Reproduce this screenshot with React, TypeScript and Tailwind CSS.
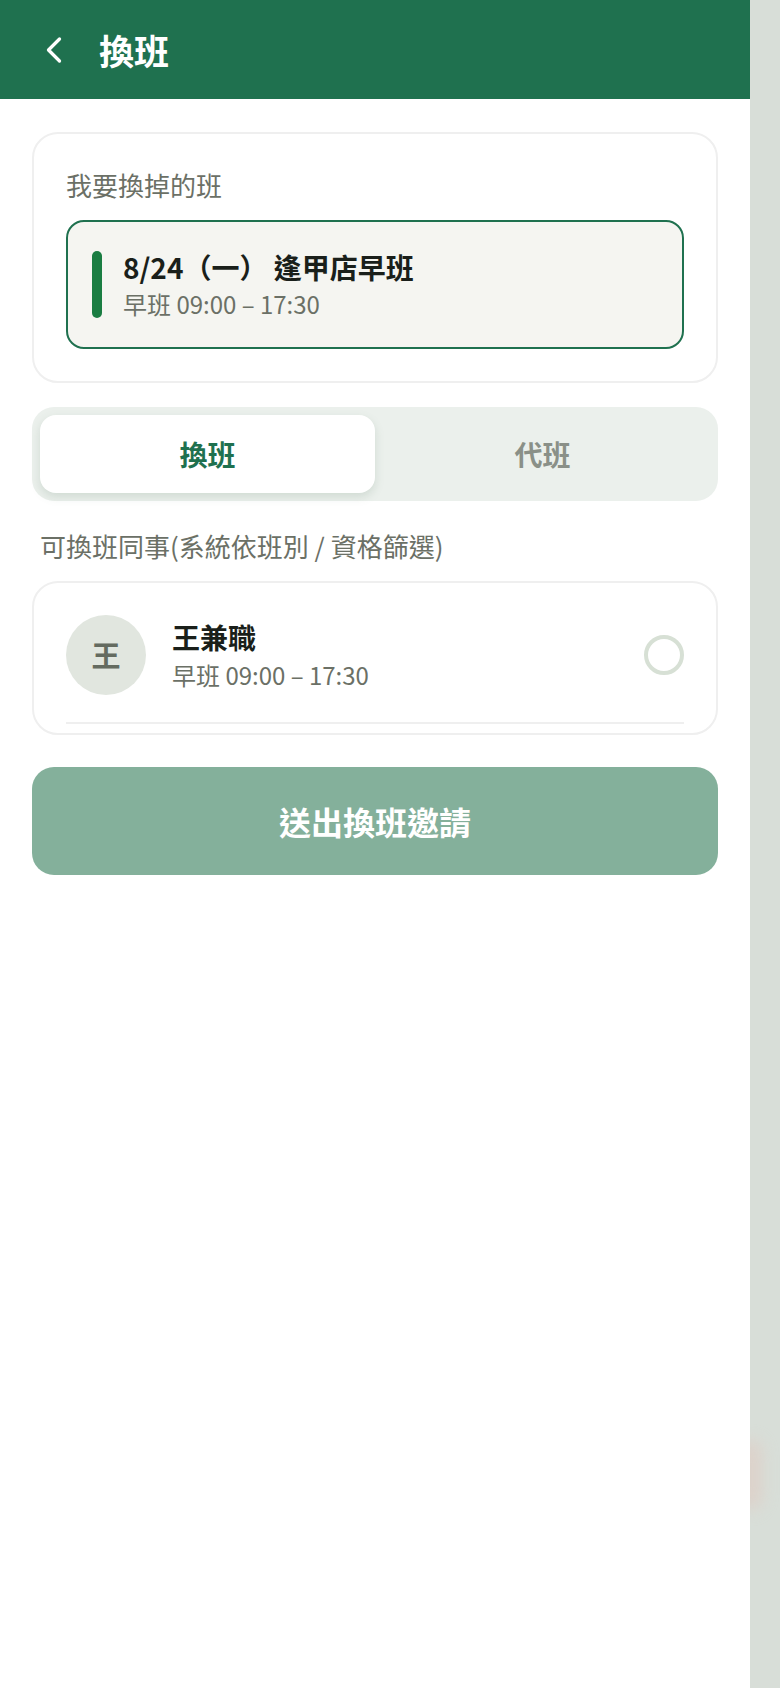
import { ChevronLeft } from 'lucide-react';

export default function App() {
  const colleagues = [
    { initial: '王', name: '王兼職', shift: '早班 09:00 – 17:30' },
  ];

  return (
    <div className="relative min-h-screen bg-[#d8ded8] font-['Noto_Sans_CJK_TC','Noto_Sans',sans-serif]">
      {/* faint shadow peeking on the right edge */}
      <div className="absolute left-[738px] top-[1440px] h-[70px] w-[24px] rounded-full bg-[#e2c6bd] blur-[8px] opacity-50" />

      <main className="relative z-10 w-[750px] min-h-[1688px] bg-white">
        {/* Header */}
        <header className="flex h-[99px] items-center bg-[#1f714f] px-8">
          <ChevronLeft className="h-[44px] w-[44px] text-white" strokeWidth={1.8} />
          <h1 className="ml-[23px] text-[35px] font-bold leading-none text-white">換班</h1>
        </header>

        <div className="px-8 pt-[33px]">
          {/* Shift to swap */}
          <section className="rounded-[26px] border-2 border-[#efefef] px-8 pb-8 pt-8">
            <p className="text-[26px] leading-[38px] text-[#6b7066]">我要換掉的班</p>
            <div className="mt-[16px] flex items-center gap-[21px] rounded-[18px] border-2 border-[#1f714f] bg-[#f5f5f1] px-6 pb-[26px] pt-[25px]">
              <div className="h-[67px] w-[10px] shrink-0 rounded-full bg-[#1a7d42]" />
              <div>
                <p className="text-[28px] font-bold leading-[40px] text-[#1a1f1a]">8/24（一） 逢甲店早班</p>
                <p className="text-[24px] leading-[34px] text-[#6b7066]">早班 09:00 – 17:30</p>
              </div>
            </div>
          </section>

          {/* Tabs */}
          <div className="mt-[24px] grid grid-cols-2 rounded-[22px] bg-[#ebf0ec] p-2">
            <button className="flex h-[78px] items-center justify-center rounded-[16px] bg-white text-[28px] font-bold text-[#1f714f] shadow-[0_4px_10px_rgba(90,120,100,0.18)]">
              換班
            </button>
            <button className="flex h-[78px] items-center justify-center text-[28px] font-bold text-[#8a9088]">
              代班
            </button>
          </div>

          {/* Colleague list */}
          <p className="mt-[26px] pl-2 text-[26px] leading-[38px] text-[#6b7066]">可換班同事(系統依班別 / 資格篩選)</p>
          <section className="mt-[16px] rounded-[26px] border-2 border-[#efefef] px-8 pb-[9px] pt-8">
            {colleagues.map((c, i) => (
              <div key={i} className="flex items-center border-b-2 border-[#efefef] pb-[27px]">
                <div className="flex h-[80px] w-[80px] shrink-0 items-center justify-center rounded-full bg-[#e1e6df] text-[29px] font-semibold text-[#646b60]">
                  {c.initial}
                </div>
                <div className="ml-[26px] flex-1">
                  <p className="text-[28px] font-bold leading-[40px] text-[#1a1f1a]">{c.name}</p>
                  <p className="text-[24px] leading-[36px] text-[#6b7066]">{c.shift}</p>
                </div>
                <div className="h-[40px] w-[40px] rounded-full border-4 border-[#d7e0d5]" />
              </div>
            ))}
          </section>

          {/* Submit */}
          <button className="mt-[32px] flex h-[108px] w-full items-center justify-center rounded-[22px] bg-[#84b09b] text-[32px] font-bold text-white">
            送出換班邀請
          </button>
        </div>
      </main>
    </div>
  );
}
